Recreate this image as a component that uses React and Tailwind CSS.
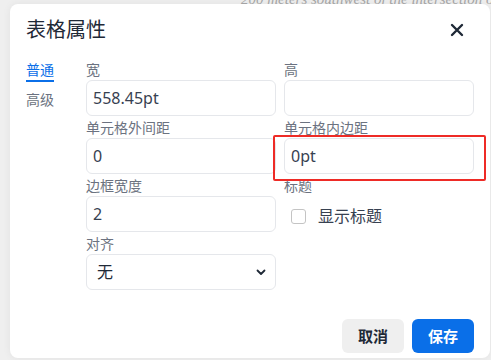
import React from "react";

const font = { fontFamily: '"Noto Sans", "Noto Sans CJK SC", sans-serif' };

function Field({ label, children }) {
  return (
    <div className="flex flex-col">
      <div className="h-5 text-sm leading-5 text-[#6b7280]">{label}</div>
      {children}
    </div>
  );
}

function TextInput({ value }) {
  return (
    <div className="h-9 rounded-md border border-[#e5e7eb] bg-white pl-[6px] flex items-center text-base text-[#374151]">
      {value}
    </div>
  );
}

export default function App() {
  return (
    <div className="relative w-[491px] h-[360px] overflow-hidden bg-[#efefef]" style={font}>
      <div
        className="absolute left-[241px] top-[-12px] whitespace-nowrap text-[15px] italic text-[#a8a8a8]"
        style={{ fontFamily: '"Liberation Serif", serif' }}
      >
        200 meters southwest of the intersection of Longjing
      </div>
      <div className="relative ml-[10px] mt-[4px] w-[480px] h-[354px] rounded-lg bg-white shadow-[0_0_8px_rgba(0,0,0,0.06)] px-4 pt-3 flex flex-col">
        <div className="flex items-center justify-between h-7">
          <div className="text-xl leading-7 text-[#1f2937]">表格属性</div>
          <svg width="14" height="14" viewBox="0 0 14 14" className="mr-[10px]">
            <path d="M2 2 L12 12 M12 2 L2 12" stroke="#1f2937" strokeWidth="2.4" strokeLinecap="round" />
          </svg>
        </div>
        <div className="mt-4 flex">
          <div className="w-[60px] shrink-0 flex flex-col items-start">
            <div className="text-sm leading-5 text-[#0b6fe8] border-b-2 border-[#0b6fe8]">普通</div>
            <div className="mt-2 text-sm leading-5 text-[#6b7280]">高级</div>
          </div>
          <div className="grid grid-cols-2 gap-x-2 gap-y-[2px] w-[390px]">
            <Field label="宽">
              <TextInput value="558.45pt" />
            </Field>
            <Field label="高">
              <TextInput value="" />
            </Field>
            <Field label="单元格外间距">
              <TextInput value="0" />
            </Field>
            <Field label="单元格内边距">
              <div className="relative">
                <TextInput value="0pt" />
                <div className="absolute left-[-11px] right-[-12px] top-[-3px] bottom-[-7px] rounded-[2px] border-2 border-[#ee2b26]" />
              </div>
            </Field>
            <Field label="边框宽度">
              <TextInput value="2" />
            </Field>
            <Field label="标题">
              <div className="h-9 flex items-center pl-[7px] pt-1">
                <div className="w-[15px] h-[15px] rounded-[3px] border border-[#c4c4c4] bg-white" />
                <span className="ml-3 text-base text-[#374151]">显示标题</span>
              </div>
            </Field>
            <Field label="对齐">
              <div className="h-9 rounded-md border border-[#e5e7eb] bg-white pl-[10px] pr-[9px] flex items-center justify-between text-base text-[#1f2937]">
                <span>无</span>
                <svg width="10" height="7" viewBox="0 0 10 7">
                  <path d="M1.5 1.5 L5 5 L8.5 1.5" stroke="#1f2937" strokeWidth="1.8" fill="none" strokeLinecap="round" strokeLinejoin="round" />
                </svg>
              </div>
            </Field>
          </div>
        </div>
        <div className="mt-auto mb-[5px] flex justify-end gap-2">
          <div className="w-[62px] h-[34px] rounded-md bg-[#efefef] flex items-center justify-center text-[15px] font-bold text-[#1f2937]">
            取消
          </div>
          <div className="w-[62px] h-[34px] rounded-md bg-[#0a6fe8] flex items-center justify-center text-[15px] font-bold text-white">
            保存
          </div>
        </div>
      </div>
    </div>
  );
}
